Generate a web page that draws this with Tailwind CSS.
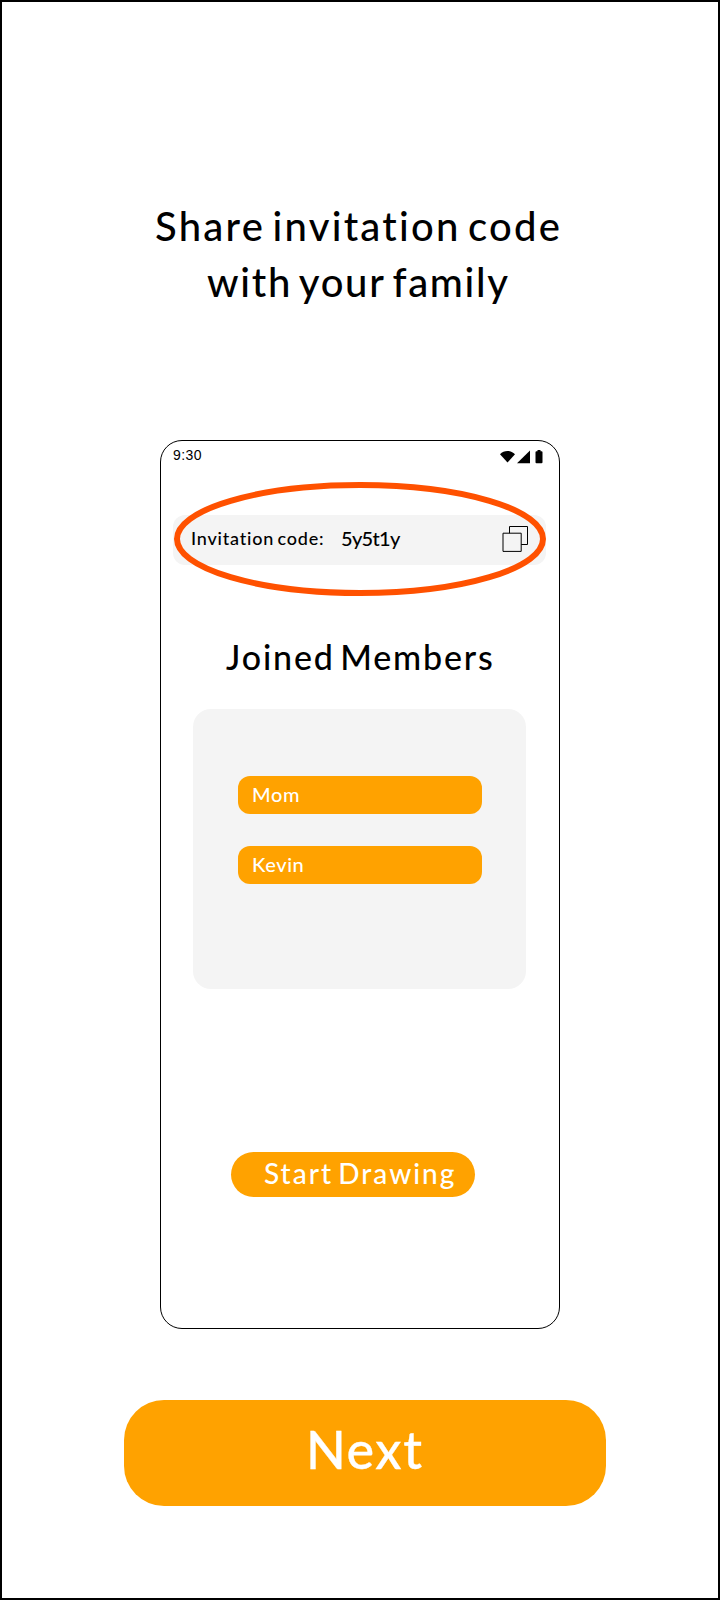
<!DOCTYPE html>
<html lang="en">
<head>
<meta charset="utf-8">
<title>Share invitation code</title>
<script src="https://cdn.jsdelivr.net/npm/@tailwindcss/browser@4"></script>
</head>
<body class="bg-white">
<main class="flex h-[1600px] w-[720px] flex-col border-2 border-black bg-white font-['Lato',sans-serif] font-medium text-black">
  <h1 class="mt-[196px] flex flex-col whitespace-nowrap text-[40px] leading-[56px]">
    <span class="ml-[153px] tracking-[2.25px] [word-spacing:-5px]">Share invitation code</span>
    <span class="ml-[205px] tracking-[1.7px] [word-spacing:-4px]">with your family</span>
  </h1>

  <section class="ml-[158px] mt-[130px] flex h-[888.5px] w-[400px] flex-col rounded-[22px] border border-black">
    <div class="mt-1 flex h-5 items-center justify-between pl-3 pr-4">
      <span class="font-['Liberation_Sans',sans-serif] text-sm font-normal tracking-[0.4px]">9:30</span>
      <svg class="mt-[3px]" width="44" height="14" viewBox="0 0 44 14">
        <path d="M8.5 12.5 1 4.2C5-.2 12-.2 16 4.2Z"/>
        <path d="M18 13.2 31 .5v12.7Z"/>
        <path d="M38.5 0h3v1.3h1q1 0 1 1v10q0 1-1 1h-5q-1 0-1-1v-10q0-1 1-1h1Z"/>
      </svg>
    </div>

    <div class="relative ml-3 mt-[50px] flex h-[50px] w-[373px] items-center rounded-xl bg-[#f4f4f4] pb-0.5 whitespace-nowrap">
      <span class="ml-[18px] w-[150px] pb-0.5 text-[18px] tracking-[0.8px] [word-spacing:-2px]">Invitation code:</span>
      <span class="pb-0.5 text-[20px] tracking-[-0.7px]">5y5t1y</span>
      <svg class="ml-auto mr-[17px]" width="27" height="27" viewBox="0 0 27 27" fill="#f4f4f4" stroke="#000">
        <path d="M7.5.5h18v18h-18z"/>
        <path d="M1 7.2h18.2v18.2H1z"/>
      </svg>
      <svg class="absolute left-0 top-[-33px]" width="374" height="115" viewBox="0 0 374 115" fill="none" stroke="#ff5100" stroke-width="6">
        <ellipse cx="187" cy="57" rx="183" ry="54"/>
      </svg>
    </div>

    <h2 class="ml-[65px] mt-[71px] whitespace-nowrap text-[34px] leading-[42px] tracking-[1.85px] [word-spacing:-5px]">Joined Members</h2>

    <div class="ml-8 mt-[31px] flex h-[280px] w-[333px] flex-col gap-8 rounded-[18px] bg-[#f4f4f4] pl-[45px] pt-[67px] text-[20px] text-white">
      <div class="flex h-[38px] w-[244px] items-center rounded-xl bg-[#ffa200] pb-[3px] pl-3.5 tracking-[0.7px]">Mom</div>
      <div class="flex h-[38px] w-[244px] items-center rounded-xl bg-[#ffa200] pb-[3px] pl-3.5 tracking-[0.6px]">Kevin</div>
    </div>

    <button class="ml-[70px] mt-[163px] flex h-[45px] w-[244px] items-center whitespace-nowrap rounded-full bg-[#ffa200] pb-1 pl-[33px] text-[28px] tracking-[2px] text-white [word-spacing:-4px]">Start Drawing</button>
  </section>

  <button class="ml-[122px] mt-[71.5px] flex h-[106px] w-[482px] items-center rounded-[40px] bg-[#ffa200] pb-2 pl-[182px] text-[52px] tracking-[1.6px] text-white [-webkit-text-stroke:0.3px]">Next</button>
</main>
</body>
</html>
